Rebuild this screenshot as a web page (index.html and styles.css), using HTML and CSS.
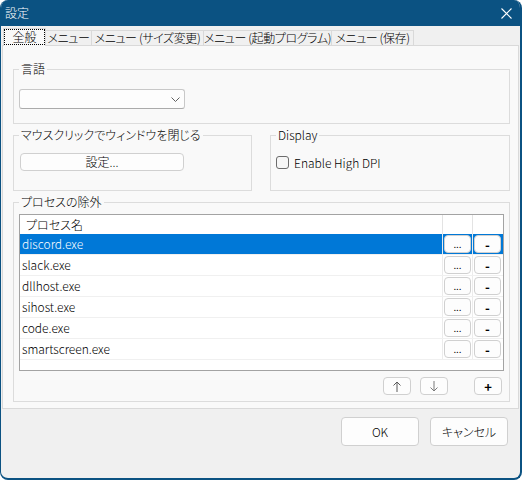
FILE: index.html
```html
<!DOCTYPE html>
<html lang="ja">
<head>
<meta charset="utf-8">
<title>設定</title>
<link rel="stylesheet" href="styles.css">
</head>
<body>
<div class="window">
  <div class="titlebar">
    <span class="title">設定</span>
    <svg class="close" width="11" height="11" viewBox="0 0 11 11"><path d="M0.5 0.5 L10.5 10.5 M10.5 0.5 L0.5 10.5" stroke="#fff" stroke-width="1.1" fill="none"/></svg>
  </div>
  <div class="client">
    <div class="tabs">
      <div class="tab active"><span class="focus">全般</span></div>
      <div class="tab">メニュー</div>
      <div class="tab">メニュー (サイズ変更)</div>
      <div class="tab">メニュー (起動プログラム)</div>
      <div class="tab">メニュー (保存)</div>
    </div>
    <div class="panel">
      <fieldset class="group">
        <legend>言語</legend>
        <div class="combo">
          <svg width="9" height="5" viewBox="0 0 9 5"><path d="M0.5 0.5 L4.5 4.5 L8.5 0.5" stroke="#606060" stroke-width="1" fill="none"/></svg>
        </div>
      </fieldset>
      <div class="row2">
        <fieldset class="group mid">
          <legend>マウスクリックでウィンドウを閉じる</legend>
          <button class="btn wide">設定...</button>
        </fieldset>
        <fieldset class="group mid">
          <legend>Display</legend>
          <label class="check"><span class="box"></span>Enable High DPI</label>
        </fieldset>
      </div>
      <fieldset class="group procs">
        <legend>プロセスの除外</legend>
        <div class="list">
          <div class="lrow head"><div class="c-name">プロセス名</div><div class="c-btn"></div><div class="c-btn"></div></div>
          <div class="lrow sel"><div class="c-name">discord.exe</div><div class="c-btn"><button class="btn rbtn dots">...</button></div><div class="c-btn"><button class="btn rbtn minus">-</button></div></div>
          <div class="lrow"><div class="c-name">slack.exe</div><div class="c-btn"><button class="btn rbtn dots">...</button></div><div class="c-btn"><button class="btn rbtn minus">-</button></div></div>
          <div class="lrow"><div class="c-name">dllhost.exe</div><div class="c-btn"><button class="btn rbtn dots">...</button></div><div class="c-btn"><button class="btn rbtn minus">-</button></div></div>
          <div class="lrow"><div class="c-name">sihost.exe</div><div class="c-btn"><button class="btn rbtn dots">...</button></div><div class="c-btn"><button class="btn rbtn minus">-</button></div></div>
          <div class="lrow"><div class="c-name">code.exe</div><div class="c-btn"><button class="btn rbtn dots">...</button></div><div class="c-btn"><button class="btn rbtn minus">-</button></div></div>
          <div class="lrow"><div class="c-name">smartscreen.exe</div><div class="c-btn"><button class="btn rbtn dots">...</button></div><div class="c-btn"><button class="btn rbtn minus">-</button></div></div>
        </div>
        <div class="list-actions">
          <button class="btn abtn up"><svg width="8" height="11" viewBox="0 0 8 11"><path d="M4 1 L4 11 M0.5 4.5 L4 1 L7.5 4.5" stroke="#5a5a5a" stroke-width="1" fill="none"/></svg></button>
          <button class="btn abtn down"><svg width="8" height="11" viewBox="0 0 8 11"><path d="M4 0 L4 10 M0.5 6.5 L4 10 L7.5 6.5" stroke="#7a7a7a" stroke-width="1" fill="none"/></svg></button>
          <button class="btn abtn plus">+</button>
        </div>
      </fieldset>
    </div>
    <div class="footer">
      <button class="btn dlg">OK</button>
      <button class="btn dlg">キャンセル</button>
    </div>
  </div>
</div>
</body>
</html>
```

FILE: styles.css
```css
* { box-sizing: border-box; }
html, body { margin: 0; padding: 0; background: #ffffff; }
body {
  font-family: "Noto Sans CJK JP", "Noto Sans", sans-serif;
  font-size: 12px;
  font-weight: 300;
  font-feature-settings: "palt";
  color: #000;
}
.window {
  width: 522px;
  height: 480px;
  display: flex;
  flex-direction: column;
  background: #f0f0f0;
  border: 1px solid #0b5282;
  border-top: 0;
  border-right-width: 2px;
  border-bottom-width: 2px;
  border-radius: 8px;
  overflow: hidden;
}
.titlebar {
  height: 26px;
  flex: none;
  background: #0b5282;
  color: #fff;
  display: flex;
  align-items: center;
  justify-content: space-between;
  padding: 0 8px 0 4px;
}
.title { font-size: 12px; line-height: 16px; }
.close { display: block; }
.client {
  flex: 1;
  display: flex;
  flex-direction: column;
  padding: 2px 1px 0 1px;
}
.tabs {
  display: flex;
  align-items: flex-end;
  height: 17px;
  margin-left: 1px;
  position: relative;
  z-index: 1;
}
.tab {
  height: 15px;
  line-height: 14px;
  border: 1px solid #d9d9d9;
  border-bottom: 0;
  background: #f0f0f0;
  text-align: center;
  white-space: nowrap;
  letter-spacing: -0.4px;
  overflow: hidden;
  flex: none;
}
.tab + .tab { margin-left: -1px; }
.tab:nth-child(1) { width: 43px; letter-spacing: 0; }
.tab:nth-child(2) { width: 47px; }
.tab:nth-child(3) { width: 113px; }
.tab:nth-child(4) { width: 129px; }
.tab:nth-child(5) { width: 83px; }
.tab.active {
  height: 18px;
  margin-bottom: -1px;
  background: #f9f9f9;
  padding: 0 0 1px 0;
}
.focus {
  display: block;
  height: 16px;
  line-height: 14px;
  border: 1px dotted #000;
}
.panel {
  background: #f9f9f9;
  border: 1px solid #d9d9d9;
  padding: 15px 8px 6px 10px;
  display: flex;
  flex-direction: column;
  gap: 3px;
}
.group {
  margin: 0;
  min-width: 0;
  border: 1px solid #dcdcdc;
  padding: 12px 5px 14px 5px;
}
.group legend {
  padding: 0 2px;
  margin: 0;
  line-height: 16px;
  font-size: 12px;
}
.combo {
  width: 166px;
  height: 20px;
  background: #fdfdfd;
  border: 1px solid #c8c8c8;
  border-bottom-color: #ababab;
  border-radius: 3px;
  display: flex;
  align-items: center;
  justify-content: flex-end;
  padding-right: 4px;
}
.combo svg { display: block; }
.row2 {
  display: grid;
  grid-template-columns: 239px 240px;
  column-gap: 18px;
}
.group.mid { padding: 10px 5px 19px 5px; }
.btn {
  font-family: inherit;
  font-size: 12px;
  font-weight: 300;
  font-feature-settings: "palt";
  color: #000;
  background: #fdfdfd;
  border: 1px solid #d0d0d0;
  border-radius: 4px;
  padding: 0;
  margin: 0;
  display: flex;
  align-items: center;
  justify-content: center;
}
.btn.wide {
  width: 164px;
  height: 18px;
  margin-left: 1px;
  line-height: 16px;
}
.check {
  display: flex;
  align-items: center;
  gap: 5px;
  height: 18px;
}
.box {
  width: 13px;
  height: 13px;
  border: 1px solid #6c6c6c;
  border-radius: 3px;
  background: #f6f6f6;
  flex: none;
}
.group.procs { padding: 4px 5px 6px 5px; }
.list {
  height: 157px;
  background: #fff;
  border: 1px solid #a3a3a3;
}
.lrow {
  display: grid;
  grid-template-columns: 422px 30px 31px;
  height: 21px;
  border-bottom: 1px solid #f0f0f0;
}
.lrow.head {
  height: 19px;
  border-bottom: 0;
}
.c-name {
  padding-left: 2px;
  line-height: 20px;
  white-space: nowrap;
}
.head .c-name { padding-left: 6px; line-height: 19px; }
.c-btn { border-left: 1px solid #ececec; }
.head .c-btn { border-left-color: #e3e3e3; }
.lrow.sel { background: #0078d7; color: #fff; }
.rbtn {
  width: 27px;
  height: 18px;
  margin: 1px 0 0 1px;
}
.rbtn.dots {
  font-size: 11px;
  line-height: 11px;
  align-items: flex-end;
  padding-bottom: 3px;
}
.rbtn.minus { font-weight: bold; font-size: 13px; }
.list-actions {
  display: flex;
  justify-content: flex-end;
  margin-top: 6px;
  padding-right: 2px;
}
.abtn { width: 28px; height: 18px; }
.abtn svg { display: block; }
.abtn.up { margin-right: 9px; }
.abtn.down { margin-right: 26px; }
.abtn.plus { font-size: 13px; font-weight: bold; }
.footer {
  display: flex;
  justify-content: flex-end;
  gap: 11px;
  padding: 8px 11px 0 0;
}
.dlg { width: 78px; height: 29px; }
```
